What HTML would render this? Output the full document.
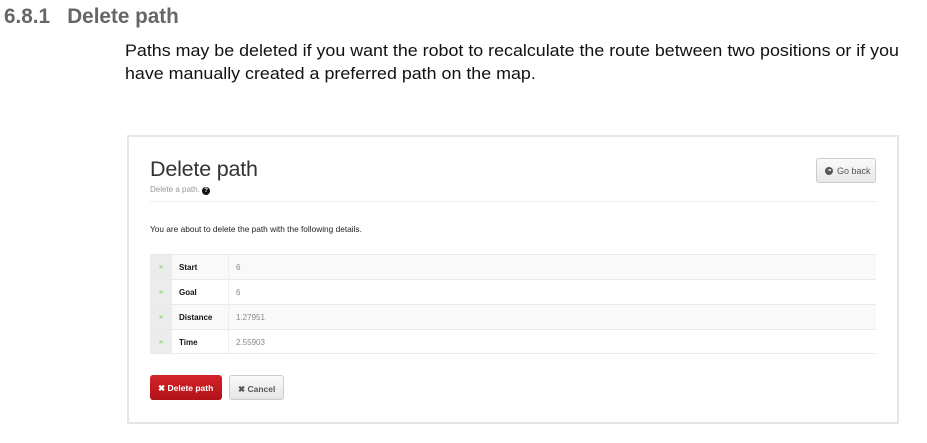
<!DOCTYPE html>
<html><head><style>
*{margin:0;padding:0;box-sizing:border-box}
body{width:927px;height:443px;background:#fff;position:relative;overflow:hidden;font-family:"Liberation Sans",sans-serif}
.a{position:absolute;white-space:nowrap}
.h{left:4px;top:5px;font-size:21px;font-weight:bold;color:#666;transform:scaleX(0.985);transform-origin:left}
.p{left:125px;font-size:17px;color:#111;transform:scaleX(1.05);transform-origin:left}
.box{left:127px;top:135px;width:772px;height:289px;border:2px solid #e6e6e6;position:absolute}
.t{left:150px;top:157px;font-size:21.5px;color:#333;letter-spacing:-0.2px}
.st{left:150px;top:185px;font-size:8px;color:#999}
.hr{position:absolute;left:150px;top:201px;width:726px;height:1px;background:#eee}
.gb{position:absolute;left:816px;top:158px;width:60px;height:25px;border:1px solid #ccc;border-radius:3px;background:linear-gradient(#fafafa,#e8e8e8);font-size:9px;color:#555;display:flex;align-items:center;padding-left:8px;white-space:nowrap}
.txt{left:150px;top:224px;font-size:8.3px;color:#222}
.row{position:absolute;left:150px;width:726px;height:25px;border-top:1px solid #eaeaea;font-size:8px}
.row .c1{position:absolute;left:0;top:0;width:22px;height:100%;background:#ececec;color:#7c6;text-align:center;line-height:24px;font-size:8px}
.row .c2{position:absolute;left:29px;top:8px;font-weight:bold;color:#111}
.row .c3{position:absolute;left:78px;top:0;height:100%;border-left:1px solid #eee;padding:8px 0 0 7px;color:#888}
.btn{position:absolute;top:375px;height:25px;border-radius:3px;font-size:8.5px;padding:8px 0 0 8px;white-space:nowrap}
.ic{display:inline-block;width:8px;height:8px;border-radius:50%;background:#555;margin-right:4px;position:relative}
.ic:after{content:"";position:absolute;left:2px;top:2.5px;border-right:4px solid #fff;border-top:1.5px solid transparent;border-bottom:1.5px solid transparent}
</style></head><body>
<div class="a h">6.8.1&nbsp;&nbsp;&nbsp;Delete path</div>
<div class="a p" style="top:41px">Paths may be deleted if you want the robot to recalculate the route between two positions or if you</div>
<div class="a p" style="top:64px">have manually created a preferred path on the map.</div>
<div class="box"></div>
<div class="a t">Delete path</div>
<div class="a st">Delete a path. <span style="display:inline-block;width:8px;height:8px;border-radius:50%;background:#111;color:#fff;font-size:6px;text-align:center;line-height:8px;font-weight:bold">?</span></div>
<div class="hr"></div>
<div class="gb"><span class="ic"></span>Go back</div>
<div class="a txt">You are about to delete the path with the following details.</div>
<div class="row" style="top:254px;background:#f9f9f9"><div class="c1">»</div><div class="c2">Start</div><div class="c3">6</div></div>
<div class="row" style="top:279px"><div class="c1">»</div><div class="c2">Goal</div><div class="c3">6</div></div>
<div class="row" style="top:304px;background:#f9f9f9"><div class="c1">»</div><div class="c2">Distance</div><div class="c3">1.27951</div></div>
<div class="row" style="top:329px;border-bottom:1px solid #eaeaea"><div class="c1">»</div><div class="c2">Time</div><div class="c3">2.55903</div></div>
<div class="btn" style="left:150px;width:72px;background:linear-gradient(#d4242a,#b01218);color:#fff;font-weight:bold">✖ Delete path</div>
<div class="btn" style="left:229px;width:55px;border:1px solid #ccc;background:linear-gradient(#fafafa,#e6e6e6);color:#555;font-weight:bold">✖ Cancel</div>
</body></html>
